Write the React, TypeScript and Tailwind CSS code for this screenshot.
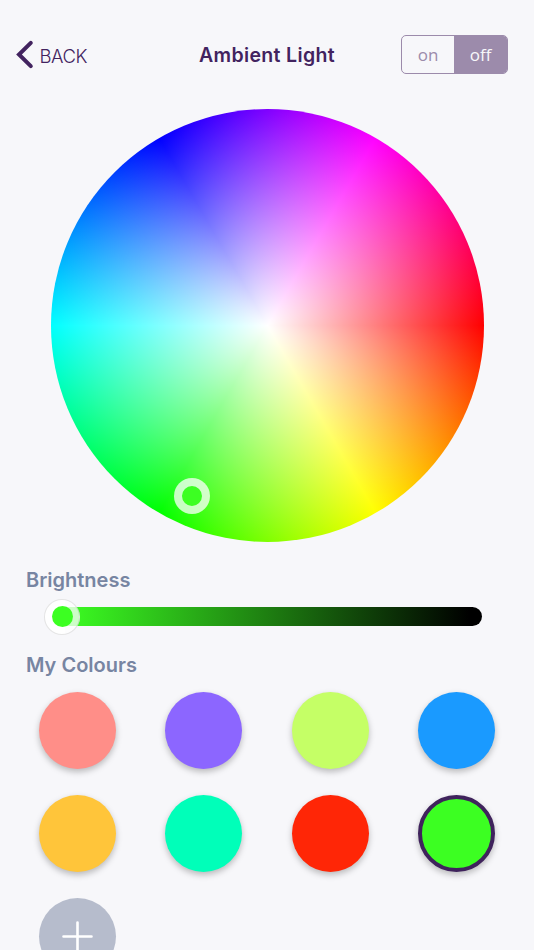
import React, { useState } from 'react';
import clsx from 'clsx';

interface Swatch {
  id: string;
  className: string;
}

const SWATCHES: Swatch[] = [
  { id: 'coral', className: 'bg-[#ff8e88]' },
  { id: 'violet', className: 'bg-[#8c66ff]' },
  { id: 'lime', className: 'bg-[#c5ff66]' },
  { id: 'sky', className: 'bg-[#1a9aff]' },
  { id: 'amber', className: 'bg-[#ffc53a]' },
  { id: 'mint', className: 'bg-[#00ffb9]' },
  { id: 'red', className: 'bg-[#ff2606]' },
  { id: 'green', className: 'bg-[#3cff22]' },
];

const Header: React.FC = () => {
  const [power, setPower] = useState<'on' | 'off'>('off');

  return (
    <header className="grid grid-cols-[1fr_auto_1fr] items-center shrink-0 h-[39px] mt-[35px] pl-4 pr-[26px]">
      <button className="flex items-center text-[#42235f]">
        <svg className="w-[18px] h-[29px]" viewBox="0 0 18 29" fill="none">
          <path
            d="M14.8 2.9L3 14.5L14.8 26.1"
            stroke="currentColor"
            strokeWidth="4"
            strokeLinecap="round"
            strokeLinejoin="miter"
          />
        </svg>
        <span className="ml-[5.5px] mt-[2px] font-[350] text-[18.5px] leading-6 tracking-[-0.5px]">
          BACK
        </span>
      </button>

      <h1 className="pl-[10px] text-[19.5px] leading-6 font-semibold text-[#42235f] tracking-[0.35px]">
        Ambient Light
      </h1>

      <div className="flex justify-self-end w-[107px] h-[39px] rounded-[5px] border border-[#9c8bab] overflow-hidden text-[17px] font-['Open_Sans',sans-serif]">
        {(['on', 'off'] as const).map((value) => (
          <button
            key={value}
            onClick={() => setPower(value)}
            className={clsx(
              value === 'on' ? 'w-[52px]' : 'w-[53px]',
              power === value ? 'bg-[#9c8bab] text-[#f7f7fa]' : 'text-[#9c8bab]'
            )}
          >
            {value}
          </button>
        ))}
      </div>
    </header>
  );
};

const ColourWheel: React.FC = () => (
  <div className="relative shrink-0 w-[433px] h-[433px] mt-[34.5px] ml-[50.5px] rounded-full bg-[radial-gradient(closest-side,#fff,rgba(255,255,255,0)),conic-gradient(from_90deg,#f00,#ff0,#0f0,#0ff,#00f,#f0f,#f00)]">
    {/* Picker handle */}
    <div className="absolute left-[123.5px] top-[369.5px] w-9 h-9 rounded-full border-8 border-white/75 bg-[#3cff22] bg-clip-padding" />
  </div>
);

const BrightnessSlider: React.FC = () => (
  <div className="relative flex items-center shrink-0 h-9 mt-[7px] ml-[44px] w-[438px]">
    <div className="w-[420px] ml-[18px] h-[19px] rounded-r-full bg-[linear-gradient(to_right,#3cff22,#000_97%)]" />
    <div className="absolute left-0 top-0 w-9 h-9 rounded-full border border-black/10 bg-[linear-gradient(to_right,#fff_60%,rgba(255,255,255,0.75)_60%)]" />
    <div className="absolute left-[7.5px] top-[7.5px] w-[21px] h-[21px] rounded-full bg-[#3cff22]" />
  </div>
);

const App: React.FC = () => {
  const [selected, setSelected] = useState('green');

  return (
    <div className="flex flex-col w-full h-screen overflow-hidden bg-[#f7f7fa] font-['Inter',sans-serif]">
      <Header />
      <ColourWheel />

      <h2 className="mt-[26px] ml-[26px] shrink-0 text-[20px] leading-6 font-semibold text-[#7785a2]">
        Brightness
      </h2>
      <BrightnessSlider />

      <h2 className="mt-[18px] ml-[26px] shrink-0 text-[20px] leading-6 font-semibold text-[#7785a2]">
        My Colours
      </h2>
      <div className="grid grid-cols-4 mt-[15px] ml-[39px] w-[505px] gap-y-[26px] shrink-0">
        {SWATCHES.map((swatch) => (
          <button
            key={swatch.id}
            onClick={() => setSelected(swatch.id)}
            className={clsx(
              'w-[77px] h-[77px] rounded-full shadow-[0_3px_6px_rgba(0,0,0,0.25)]',
              swatch.className,
              selected === swatch.id && 'border-4 border-[#3f235c]'
            )}
          />
        ))}
        {/* Add colour */}
        <button className="flex items-center justify-center w-[77px] h-[77px] rounded-full bg-[#b6bccc] text-white">
          <svg className="w-[33px] h-[33px]" viewBox="0 0 33 33" fill="none">
            <path d="M16.5 2.5V30.5M2.5 16.5H30.5" stroke="currentColor" strokeWidth="2.6" strokeLinecap="round" />
          </svg>
        </button>
      </div>
    </div>
  );
};

export default App;
